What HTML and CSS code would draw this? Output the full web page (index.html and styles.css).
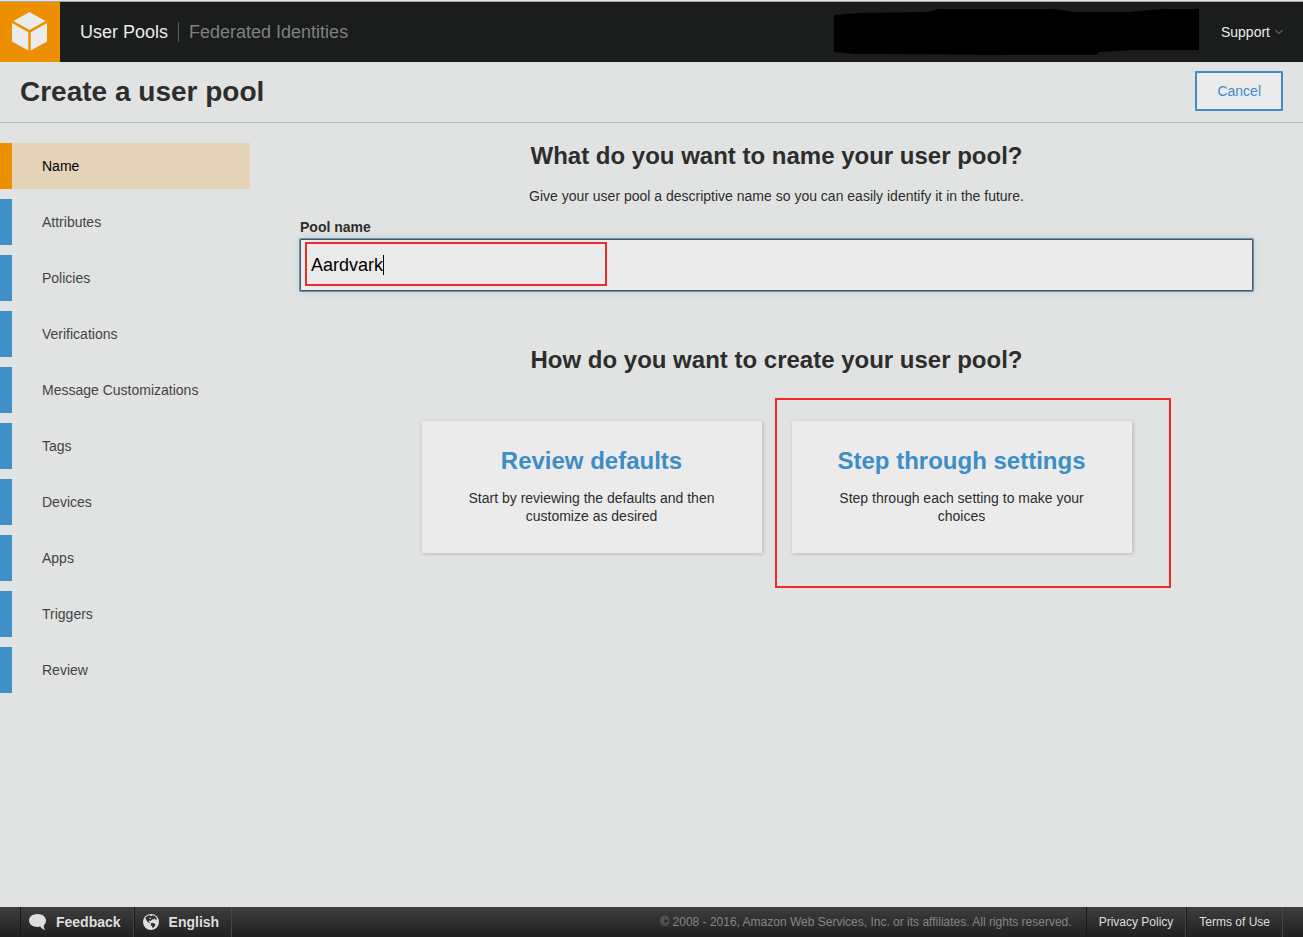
FILE: index.html
```html
<!DOCTYPE html>
<html lang="en">
<head>
<meta charset="utf-8">
<meta name="viewport" content="width=device-width, initial-scale=1">
<title>Create a user pool</title>
<link rel="stylesheet" href="styles.css">
</head>
<body>
<header class="topbar">
  <a class="logo" href="#" aria-label="Home">
    <svg width="60" height="60" viewBox="0 0 60 60" fill="#ebebeb" aria-hidden="true">
      <path d="M29.500 10 45.500 19 29.500 28 13.500 19Z"/>
      <path d="M12 21 28.300 30.200V48.500L12 39.500Z"/>
      <path d="M47 21 30.700 30.200V48.500L47 39.500Z"/>
    </svg>
  </a>
  <nav class="pools">
    <a class="pool-link current" href="#">User Pools</a>
    <a class="pool-link" href="#">Federated Identities</a>
  </nav>
  <svg class="account" width="365" height="46" viewBox="0 0 365 46" aria-hidden="true">
    <path d="M0 6 26 4 94 3 104 0H218L242 3H295L315 1 335 0H365V41L300 41 265 43 262 46H180L55 45 20 45 0 43Z"/>
  </svg>
  <button class="support" type="button">Support
    <svg width="8" height="6" viewBox="0 0 8 6" fill="none" stroke="#8b8b8b" aria-hidden="true"><path d="M.5 1 4 4.500 7.500 1"/></svg>
  </button>
</header>
<div class="titlebar">
  <h1>Create a user pool</h1>
  <button class="cancel" type="button">Cancel</button>
</div>
<div class="content">
  <nav class="steps">
    <a class="step active" href="#">Name</a>
    <a class="step" href="#">Attributes</a>
    <a class="step" href="#">Policies</a>
    <a class="step" href="#">Verifications</a>
    <a class="step" href="#">Message Customizations</a>
    <a class="step" href="#">Tags</a>
    <a class="step" href="#">Devices</a>
    <a class="step" href="#">Apps</a>
    <a class="step" href="#">Triggers</a>
    <a class="step" href="#">Review</a>
  </nav>
  <main>
    <h2>What do you want to name your user pool?</h2>
    <p class="hint">Give your user pool a descriptive name so you can easily identify it in the future.</p>
    <label for="pool-name">Pool name</label>
    <div class="field">
      <input id="pool-name" type="text" value="Aardvark">
      <span class="caret"></span>
      <span class="mark mark-name"></span>
    </div>
    <h2>How do you want to create your user pool?</h2>
    <div class="choices">
      <button class="choice" type="button">
        <span class="choice-title">Review defaults</span>
        <span class="choice-text">Start by reviewing the defaults and then customize as desired</span>
      </button>
      <div class="choice-wrap">
        <button class="choice" type="button">
          <span class="choice-title">Step through settings</span>
          <span class="choice-text">Step through each setting to make your choices</span>
        </button>
        <span class="mark mark-step"></span>
      </div>
    </div>
  </main>
</div>
<footer class="footer">
  <div class="tools">
    <button class="tool" type="button">
      <svg width="17" height="18" viewBox="0 0 17 18" fill="#dedede" aria-hidden="true"><path d="M8.500 1C3.800 1 0 3.800 0 7.500S3.800 14 8.500 14c1 0 2-.1 2.800-.4 1 1.700 2.600 3 5 3.400-1.300-1.400-1.700-3-1.500-4.900C16.400 10.900 17 9.300 17 7.500 17 3.800 13.200 1 8.500 1Z"/></svg>
      Feedback
    </button>
    <button class="tool" type="button">
      <svg width="16" height="16" viewBox="0 0 16 16" aria-hidden="true"><circle cx="8" cy="8" r="8" fill="#dedede"/><path fill="#303030" d="M2.500 3.500 5 1.500 7 1.300 8 2.300 10 1.200 12.500 2.600 14 5 12.800 6.200 11.800 4.300 10.800 5.300 9 5.600 7.800 7 6.300 6.600 5.600 7.600 7 8.500 6.600 9.300 4.500 7.800 3 5.500ZM8 9.300 10 8.700 12.500 10.300 11.700 12.300 9.800 14.300 9 12.300 7.600 11Z"/><path fill="#dedede" d="M6.500 3.500 8 3.800 7.400 5 6.200 4.700Z"/></svg>
      English
    </button>
  </div>
  <div class="legal">
    <span class="copyright">© 2008 - 2016, Amazon Web Services, Inc. or its affiliates. All rights reserved.</span>
    <a href="#">Privacy Policy</a>
    <a href="#">Terms of Use</a>
  </div>
</footer>
</body>
</html>
```

FILE: styles.css
```css
* { box-sizing: border-box; }

body {
  margin: 0;
  min-height: 100vh;
  display: flex;
  flex-direction: column;
  background: #e1e3e2;
  color: #2d2d2d;
  font: 14px/18px "Liberation Sans", Arial, sans-serif;
  border-top: 1px solid #e4e4e4;
}

a { color: inherit; text-decoration: none; }
button { font: inherit; color: inherit; cursor: pointer; }
svg { display: block; flex: none; }
h1, h2, p { margin: 0; }

.topbar {
  display: flex;
  align-items: center;
  height: 61px;
  padding-right: 20px;
  background: #1b1d1c;
  border-top: 1px solid #a8a8a8;
}
.logo { background: #ec8f00; }
.pools { display: flex; margin: 0 auto 0 20px; font-size: 18px; line-height: 20px; }
.pool-link { color: #7d8181; }
.pool-link.current {
  color: #ebebeb;
  padding-right: 10px;
  margin-right: 10px;
  border-right: 1px solid #5a5d5d;
}
.account { fill: #000; margin-right: 22px; }
.support {
  display: flex;
  align-items: center;
  gap: 5px;
  padding: 0;
  border: 0;
  background: none;
  color: #ebebeb;
}

.titlebar {
  display: flex;
  align-items: flex-start;
  justify-content: space-between;
  padding: 9px 20px;
  border-bottom: 1px solid #b7b9b8;
}
.titlebar h1 { font-size: 28px; line-height: 42px; }
.cancel {
  height: 40px;
  padding: 0 20px;
  border: 2px solid #3c8dc8;
  border-radius: 1px;
  background: #ebebeb;
  color: #3c8dc8;
}

.content { display: flex; flex: 1; }
.steps {
  display: flex;
  flex-direction: column;
  gap: 10px;
  width: 250px;
  flex: none;
  padding: 20px 0;
}
.step {
  padding: 14px 0 14px 30px;
  border-left: 12px solid #3f8fc9;
  color: #444;
}
.step.active { background: #e4d3b8; border-color: #ec8f00; color: #000; }

main { flex: 1; padding: 16px 50px; }
h2 { font-size: 24px; line-height: 34px; text-align: center; }
.hint { margin: 14px 0 13px; text-align: center; }
label { display: block; font-weight: bold; }
.field { position: relative; margin: 3px 0 52px; }
.field input {
  display: block;
  width: 100%;
  height: 52px;
  padding: 0 10px;
  border: 1px solid #315f80;
  border-radius: 1px;
  outline: 0;
  background: #ebebeb;
  box-shadow: 0 0 0 1px #7f8a90, 0 0 8px #b0cae2;
  color: #000;
  font: 18px "Liberation Sans", Arial, sans-serif;
}
.caret {
  position: absolute;
  left: 83px;
  top: 16px;
  width: 1px;
  height: 20px;
  background: #000;
}
.mark { position: absolute; border: 2px solid #f02a2a; pointer-events: none; }
.mark-name { left: 5px; top: 3px; width: 302px; height: 44px; }
.mark-step { left: -17px; top: -23px; width: 396px; height: 190px; }

.choices { display: flex; justify-content: center; gap: 30px; margin-top: 44px; }
.choice-wrap { position: relative; }
.choice {
  width: 340px;
  padding: 24px 40px 28px;
  border: 0;
  border-radius: 1px;
  background: #ebebeb;
  box-shadow: 1px 1px 4px rgba(0, 0, 0, .2);
  text-align: center;
}
.choice span { display: block; }
.choice-title { margin-bottom: 12px; color: #3c8dc8; font-size: 24px; line-height: 32px; font-weight: bold; }

.footer {
  display: flex;
  justify-content: space-between;
  height: 30px;
  padding: 0 20px;
  background: linear-gradient(#3e3e3e, #202020);
}
.tools, .legal { display: flex; }
.tool {
  display: flex;
  align-items: center;
  gap: 10px;
  padding: 0 12px 0 8px;
  border: 0;
  border-left: 1px solid #181818;
  border-right: 1px solid #464646;
  background: none;
  color: #dedede;
  font-weight: bold;
}
.legal { font-size: 12px; line-height: 30px; }
.copyright { padding-right: 14px; color: #858585; }
.legal a {
  padding: 0 12px;
  border-left: 1px solid #181818;
  border-right: 1px solid #464646;
  color: #dedede;
}
```
